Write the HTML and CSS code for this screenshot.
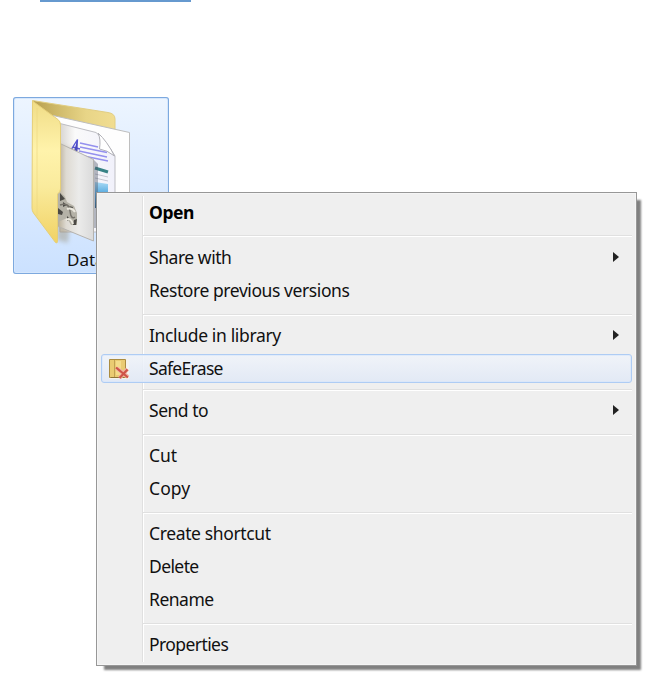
FILE: index.html
```
<!DOCTYPE html>
<html lang="en">
<head>
<meta charset="utf-8">
<title>SafeErase</title>
<link rel="stylesheet" href="styles.css">
</head>
<body>
<div class="top-rule"></div>
<div class="tile">
  <svg class="folder" viewBox="13 97 156 177" width="156" height="177">
    <defs>
      <linearGradient id="front" x1="0" y1="0" x2="0" y2="1"><stop offset="0" stop-color="#f0dc86"/><stop offset=".35" stop-color="#fff3ab"/><stop offset=".6" stop-color="#faeb9d"/><stop offset="1" stop-color="#f1d264"/></linearGradient>
      <linearGradient id="back" x1="0" y1="0" x2="1" y2="0"><stop offset="0" stop-color="#b69e50"/><stop offset=".25" stop-color="#cbb565"/><stop offset=".65" stop-color="#e8d587"/><stop offset="1" stop-color="#f1dd91"/></linearGradient>
      <linearGradient id="paper" x1="0" y1="0" x2="1" y2="0"><stop offset="0" stop-color="#b3a88f"/><stop offset=".25" stop-color="#dedad2"/><stop offset=".6" stop-color="#ebebea"/><stop offset="1" stop-color="#dadada"/></linearGradient>
      <linearGradient id="sheet" x1="0" y1="0" x2="1" y2="0"><stop offset="0" stop-color="#d3d0cc"/><stop offset=".3" stop-color="#fafafa"/><stop offset="1" stop-color="#f1f1fb"/></linearGradient>
      <linearGradient id="photo" x1="0" y1="0" x2="0" y2="1"><stop offset="0" stop-color="#a9daf5"/><stop offset=".5" stop-color="#4ba3dc"/><stop offset="1" stop-color="#245c83"/></linearGradient>
      <filter id="soft" x="-30%" y="-30%" width="160%" height="160%"><feGaussianBlur stdDeviation="2"/></filter>
      <filter id="fine"><feGaussianBlur stdDeviation=".6"/></filter>
    </defs>
    <path d="M32.500 100.500L108 112.500Q115 113.500 115 119V145L53 130Z" fill="url(#back)" stroke="#e2ce82"/>
    <path d="M53 115.500L129.500 132.500V225H57Z" fill="#fefefe" stroke="#bebebe"/>
    <path d="M58 123L96 132.500Q107 142 115 156V232H60Z" fill="url(#sheet)" stroke="#bdbdc2"/>
    <path d="M98 133Q101 139 99.500 149Q107 150 114.500 156Q107 141 98 133Z" fill="#fff" stroke="#b1b1b7"/>
    <g filter="url(#fine)">
      <path d="M71 150L77.500 139.500L76 152M72.500 147L80 149" fill="none" stroke="#5757d4" stroke-width="1.400"/>
      <path d="M77.500 139.500L74 151H77.500Z" fill="#4747c4"/>
      <path d="M80 143L98 147M80 147L107 152.500M79 151L107 157M79 155L108 161" stroke="#9490ee" stroke-width="1.500"/>
      <path d="M95 168L108 172" stroke="#398286" stroke-width="3"/>
      <path d="M95 174L108 177M95 178L108 181" stroke="#c5c5d1"/>
      <path d="M95 182L108 184V208H95Z" fill="url(#photo)"/>
    </g>
    <path d="M58 145L77 150L68 243L57 240Z" fill="#8c7c54" opacity=".35" filter="url(#soft)"/>
    <path d="M93 159L98 164V228H92Z" fill="#505666" opacity=".4" filter="url(#fine)"/>
    <path d="M60 143.500L93.500 159.500V241L57 226Z" fill="url(#paper)" stroke="#b5b3af"/>
    <g filter="url(#fine)">
      <path d="M58 192Q65 194 67 202L74 206L77 213L77 225L71 225L67 218L58 222Z" fill="#b5b2a7"/>
      <path d="M60 193L65 199L60 201Z M63 202L67 205L63 207Z M58 208L63 212L62 215L58 214Z M69 206L73 207L72 210Z M67 216L70 219L67 221Z M74 220L77 219L76 225L73 225Z" fill="#4b4a44"/>
      <path d="M60 205Q69 202 70 211T75 217" fill="none" stroke="#747169" stroke-width="1.500"/>
      <path d="M67 209Q72 207 75 212M66 220Q71 217 73 224" fill="none" stroke="#ece9df" stroke-width="2"/>
    </g>
    <path d="M32.500 101L58 119.500Q60.500 121.500 60.500 125V189Q60.500 192 57.500 194V241Q57.500 244 55.500 242.500L33.500 213Q32 211 32 208Z" fill="url(#front)" stroke="#e6cf78"/>
    <path d="M37 108V216" stroke="#ead57f" opacity=".6"/>
  </svg>
  <span class="tile-name">Data</span>
</div>
<ul class="menu">
  <li class="bold"><span class="w-open">Open</span></li>
  <li class="sep first"></li>
  <li><span class="w-share">Share with</span><i class="arrow"></i></li>
  <li><span class="w-restore">Restore previous versions</span></li>
  <li class="sep"></li>
  <li><span class="w-include">Include in library</span><i class="arrow"></i></li>
  <li class="hover">
    <svg class="erase" viewBox="0 0 20 20" width="20" height="20">
      <path d="M0 0H20V20H0Z" fill="#f5f3ed"/>
      <path d="M.5 .5H16.500V18.500H.5Z" fill="#eacb72" stroke="#ab8c40"/>
      <path d="M5.500 1V18" stroke="#c1a052"/><path d="M7 2H12V16H7Z" fill="#f4dc8b"/><path d="M2 18.500H15" stroke="#8d7437"/>
      <path d="M7.500 9L19 18M18.500 10L10.500 19" stroke="#efb2a5" stroke-width="4"/>
      <path d="M7 8.500L19 18.500M18.500 10.500L10.500 19" stroke="#cf5448" stroke-width="2.200"/>
    </svg>
    <span class="w-safe">SafeErase</span>
  </li>
  <li class="sep tight"></li>
  <li><span class="w-send">Send to</span><i class="arrow"></i></li>
  <li class="sep"></li>
  <li><span class="w-cut">Cut</span></li>
  <li><span class="w-copy">Copy</span></li>
  <li class="sep"></li>
  <li><span class="w-create">Create shortcut</span></li>
  <li><span class="w-delete">Delete</span></li>
  <li><span class="w-rename">Rename</span></li>
  <li class="sep"></li>
  <li><span class="w-props">Properties</span></li>
</ul>
</body>
</html>
```
FILE: styles.css
```
* { box-sizing: border-box; }
body {
  margin: 0;
  height: 697px;
  overflow: hidden;
  background: #fff;
  color: #111;
  font: 17.5px/33px "Noto Sans", "Open Sans", sans-serif;
  letter-spacing: -0.42px;
}
.top-rule { width: 151px; height: 2px; margin-left: 40px; background: #6699cf; }
.tile {
  position: relative;
  width: 156px;
  height: 177px;
  margin: 95px 0 0 13px;
  border-radius: 3px;
  background: linear-gradient(#edf5ff, #cbe1ff);
  box-shadow: inset 0 0 0 1px #7da9df, inset 0 0 0 2px #d6e7fc;
}
.folder { display: block; }
.tile-name { position: absolute; left: 54px; top: 146px; font-size: 17px; letter-spacing: 0; }
.menu {
  position: absolute;
  left: 96px;
  top: 192px;
  width: 541px;
  height: 474px;
  margin: 0;
  padding: 3px 4px;
  list-style: none;
  border: 1px solid #979797;
  background: linear-gradient(90deg, transparent 45px, #e0e0e0 45px, #e0e0e0 46px, #fff 46px, #fff 47px, transparent 47px) 0 3px / 100% 466px no-repeat #efefef;
  box-shadow: inset 0 0 0 1px #f5f5f5, 6px 6px 2px -2px #808080;
}
.menu li { display: flex; align-items: center; height: 33px; padding-left: 48px; padding-right: 16px; position: relative; white-space: nowrap; }
.menu .sep { height: 12px; padding: 4px 0 0; margin-left: 42px; }
.menu .sep::before { content: ""; flex: 1; height: 2px; background: linear-gradient(#e0e0e0 50%, #fff 50%); }
.menu .first { padding-top: 2px; }
.menu .tight { height: 9px; padding-top: 1px; }
.bold { font-weight: 700; color: #000; }
.menu .hover {
  height: 29px;
  margin: 2px 0;
  padding-left: 7px;
  gap: 20px;
  border: 1px solid #aeccf4;
  border-radius: 3px;
  background: linear-gradient(rgba(240, 244, 250, .85), rgba(224, 232, 246, .85));
  box-shadow: inset 0 0 0 1px rgba(214, 230, 252, .6);
}
.erase { flex: none; }
.arrow { margin-left: auto; border: 5.5px solid transparent; border-left: 6px solid #222; border-right: 0; position: relative; top: -1px; left: 3px; }
.w-share { letter-spacing: -0.45px; }
.w-include { letter-spacing: -0.35px; }
.w-safe { letter-spacing: -0.69px; }
.w-send { letter-spacing: -0.48px; }
.w-cut { letter-spacing: -0.1px; }
.w-copy { letter-spacing: 0.1px; }
.w-create { letter-spacing: -0.37px; }
.w-delete { letter-spacing: -0.6px; }
.w-rename { letter-spacing: -0.5px; }
.w-props { letter-spacing: -0.58px; }
```
